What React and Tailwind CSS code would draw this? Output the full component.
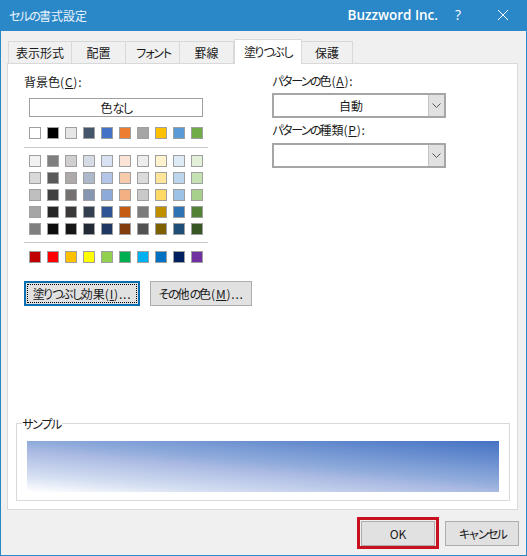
const font = { fontFamily: '"Noto Sans CJK JP", sans-serif' };
const latin = { fontFamily: '"Open Sans", sans-serif' };

const themeRow = ["bg-[#ffffff]", "bg-[#000000]", "bg-[#e7e6e6]", "bg-[#44546a]", "bg-[#4472c4]", "bg-[#ed7d31]", "bg-[#a5a5a5]", "bg-[#ffc000]", "bg-[#5b9bd5]", "bg-[#70ad47]"];
const tintRows = [
  ["bg-[#f2f2f2]", "bg-[#7f7f7f]", "bg-[#d0cece]", "bg-[#d6dce4]", "bg-[#d9e2f3]", "bg-[#fbe4d5]", "bg-[#ededed]", "bg-[#fff2cc]", "bg-[#deeaf6]", "bg-[#e2efd9]"],
  ["bg-[#d9d9d9]", "bg-[#595959]", "bg-[#aeaaaa]", "bg-[#adb9ca]", "bg-[#b4c6e7]", "bg-[#f7caac]", "bg-[#dbdbdb]", "bg-[#ffe599]", "bg-[#bdd6ee]", "bg-[#c5e0b3]"],
  ["bg-[#bfbfbf]", "bg-[#404040]", "bg-[#757070]", "bg-[#8496b0]", "bg-[#8eaadb]", "bg-[#f4b083]", "bg-[#c9c9c9]", "bg-[#ffd966]", "bg-[#9cc2e5]", "bg-[#a8d08d]"],
  ["bg-[#a6a6a6]", "bg-[#262626]", "bg-[#3a3838]", "bg-[#323f4f]", "bg-[#2f5496]", "bg-[#c55a11]", "bg-[#7b7b7b]", "bg-[#bf8f00]", "bg-[#2e74b5]", "bg-[#538135]"],
  ["bg-[#7f7f7f]", "bg-[#0d0d0d]", "bg-[#171616]", "bg-[#222a35]", "bg-[#1f3763]", "bg-[#833c0b]", "bg-[#525252]", "bg-[#7f6000]", "bg-[#1f4e79]", "bg-[#375623]"],
];
const standardRow = ["bg-[#c00000]", "bg-[#ff0000]", "bg-[#ffc000]", "bg-[#ffff00]", "bg-[#92d050]", "bg-[#00b050]", "bg-[#00b0f0]", "bg-[#0070c0]", "bg-[#002060]", "bg-[#7030a0]"];

const tabs = [
  { label: "表示形式", width: "w-[64px]", spacing: "" },
  { label: "配置", width: "w-[54px]", spacing: "" },
  { label: "フォント", width: "w-[54px]", spacing: "tracking-[-3.4px]" },
  { label: "罫線", width: "w-[54px]", spacing: "" },
  { label: "塗りつぶし", width: "w-[68px]", spacing: "tracking-[-2.4px]", active: true },
  { label: "保護", width: "w-[51px]", spacing: "" },
];

const SwatchRow = ({ colors }) => (
  <div className="flex gap-[6px] ml-[5px]">
    {colors.map((c, i) => (
      <div key={i} className={`w-[12px] h-[12px] border border-[#a0a0a0] ${c}`} />
    ))}
  </div>
);

// kana in the reference font are much narrower than in Noto
const Kana = ({ children }) => <span className="tracking-[-2.4px]">{children}</span>;

const Key = ({ k, after = ":" }) => (
  <span className="tracking-[0.8px]">
    (<span className="underline">{k}</span>){after}
  </span>
);

const Combo = ({ value, className }) => (
  <div className={`flex w-[174px] border-2 border-[#a6a6a6] bg-white ${className}`}>
    <div className="flex-1 flex items-center justify-center text-[12px]">{value}</div>
    <div className="w-[16px] bg-[#e1e1e1] border-l border-[#c4c4c4] flex items-center justify-center">
      <svg width="9" height="5" viewBox="0 0 9 5" fill="none" stroke="#555" strokeWidth="1">
        <path d="M0.5 0.5 L4.5 4.5 L8.5 0.5" />
      </svg>
    </div>
  </div>
);

export default function App() {
  return (
    <div className="w-[527px] h-[556px] flex flex-col text-[#1a1a1a]" style={font}>
      <div className="h-[31px] bg-[#2b88c8] flex items-center text-white shrink-0">
        <span className="ml-[9px] text-[12px] text-[#eaf4fb]"><span className="tracking-[-2px]">セルの</span>書式設定</span>
        <span className="ml-auto text-[13.5px] font-semibold" style={latin}>Buzzword Inc.</span>
        <span className="ml-[14px] w-[12px] text-center text-[14px] leading-none -mt-[2px]" style={latin}>?</span>
        <svg className="ml-[34px] mr-[19px] -mt-px" width="10" height="10" viewBox="0 0 10 10" stroke="#fff" strokeWidth="1" fill="none">
          <path d="M0 0 L10 10 M10 0 L0 10" />
        </svg>
      </div>

      <div className="flex-1 flex flex-col bg-[#f0f0f0] border-x border-b border-[#2b88c8]">
        <div className="flex items-end h-[25px] mt-[8px] ml-[7px] relative z-10 -mb-px">
          {tabs.map((t) =>
            t.active ? (
              <div key={t.label} className={`${t.width} h-[25px] bg-white border border-b-0 border-[#d9d9d9] flex items-center justify-center text-[12px] ${t.spacing}`}>
                {t.label}
              </div>
            ) : (
              <div key={t.label} className={`${t.width} h-[22px] mb-px border border-l-0 first:border-l border-b-0 border-[#d9d9d9] bg-[#f0f0f0] flex items-center justify-center text-[12px] ${t.spacing}`}>
                {t.label}
              </div>
            )
          )}
        </div>

        <div className="h-[447px] ml-[6px] w-[511px] bg-white border border-[#d9d9d9] flex flex-col">
          <div className="flex">
            <div className="w-[264px] pl-[16px]">
              <div className="mt-[9px] h-[18px] leading-[18px] text-[12px]">背景色<Key k="C" /></div>
              <div className="mt-[7px] ml-[5px] w-[174px] h-[19px] border border-[#a0a0a0] flex items-center justify-center text-[12px]">色<Kana>なし</Kana></div>
              <div className="mt-[10px]"><SwatchRow colors={themeRow} /></div>
              <div className="mt-[8px] w-[184px] h-px bg-[#c8c8c8]" />
              <div className="mt-[7px] flex flex-col gap-[5px]">
                {tintRows.map((row, i) => <SwatchRow key={i} colors={row} />)}
              </div>
              <div className="mt-[7px] w-[184px] h-px bg-[#c8c8c8]" />
              <div className="mt-[8px]"><SwatchRow colors={standardRow} /></div>
              <div className="mt-[18px] flex gap-[10px]">
                <div className="w-[116px] h-[25px] border-2 border-[#0a6eb0] bg-[#e1e1e1] p-px">
                  <div className="h-full border border-dotted border-black flex items-center justify-center text-[12px]">
                    <Kana>塗りつぶし</Kana>効果<Key k="I" after="..." />
                  </div>
                </div>
                <div className="w-[102px] h-[25px] border border-[#adadad] bg-[#e1e1e1] flex items-center justify-center text-[12px]">
                  <Kana>その</Kana>他<Kana>の</Kana>色<Key k="M" after="..." />
                </div>
              </div>
            </div>
            <div className="flex flex-col">
              <div className="mt-[8px] h-[18px] leading-[18px] text-[12px]"><Kana>パターンの</Kana>色<Key k="A" /></div>
              <Combo value="自動" className="mt-[3px] h-[25px]" />
              <div className="mt-[3px] h-[18px] leading-[18px] text-[12px]"><Kana>パターンの</Kana>種類<Key k="P" /></div>
              <Combo value="" className="mt-[4px] h-[25px]" />
            </div>
          </div>

          <div className="mt-auto mb-[8px] ml-[8px] w-[494px] h-[78px] border border-[#d9d9d9] relative pl-[10px] pt-[17px]">
            <span className="absolute -top-[9px] left-[5px] bg-white text-[12px] leading-[18px] tracking-[-2.4px] pr-[2px]">サンプル</span>
            <div className="w-[472px] h-[51px] bg-[linear-gradient(5deg,#ffffff_0%,#d5dff2_18%,#a9b9e2_45%,#8fabdb_55%,#4472c4_100%)]" />
          </div>
        </div>

        <div className="flex items-start justify-end pr-[7px] pt-[7px]">
          <div className="border-[3px] border-[#c8111f] px-px pt-px">
            <div className="w-[74px] h-[25px] border border-[#adadad] bg-[#e1e1e1] flex items-center justify-center text-[12px]">OK</div>
          </div>
          <div className="ml-[6px] mt-[4px] w-[74px] h-[25px] border border-[#adadad] bg-[#e1e1e1] flex items-center justify-center text-[12px] tracking-[-2.6px]">キャンセル</div>
        </div>
      </div>
    </div>
  );
}
